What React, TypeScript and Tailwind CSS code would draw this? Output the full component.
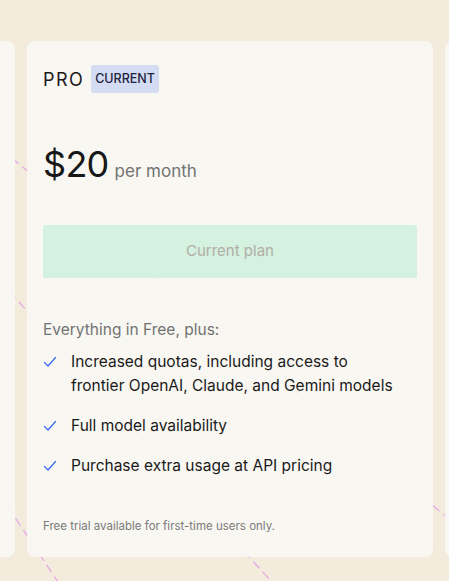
const features = [
  "Increased quotas, including access to frontier OpenAI, Claude, and Gemini models",
  "Full model availability",
  "Purchase extra usage at API pricing",
];

const Check = () => (
  <svg width="14" height="14" viewBox="0 0 14 14" fill="none" className="mt-[5px] shrink-0">
    <path d="M1.5 7.5 L5 11 L12.5 2.5" stroke="#3b6cf6" strokeWidth="1.3" strokeLinecap="round" strokeLinejoin="round" />
  </svg>
);

const Pricing = () => {
  return (
    <div className="relative w-[449px] h-[581px] overflow-hidden bg-[#f3ecdd]">
      {/* decorative dashed lines */}
      <svg className="absolute inset-0" width="449" height="581" viewBox="0 0 449 581">
        <g stroke="#e7a3e6" strokeWidth="1.2" strokeDasharray="9 5" fill="none">
          <line x1="-10" y1="140" x2="460" y2="528" />
          <line x1="0" y1="281" x2="270" y2="580" />
          <line x1="0" y1="495" x2="60" y2="585" />
        </g>
      </svg>

      <div className="relative flex gap-3 pt-[41px] ml-[-391px]">
        <div className="w-[406px] h-[516px] shrink-0 rounded-lg bg-[#faf8f4]/90" />

        <div
          className="w-[406px] h-[516px] shrink-0 rounded-lg bg-[#faf8f4]/90 px-4 pt-6 flex flex-col"
          style={{ fontFamily: "Inter, sans-serif" }}
        >
          <div className="flex items-center gap-[7px]">
            <span className="text-[18px] tracking-[0.08em] text-[#1a1a1a]">PRO</span>
            <span className="h-7 px-1 flex items-center rounded-[3px] bg-[#d4dcf4] text-[12.5px] font-medium text-[#1d2440]">
              CURRENT
            </span>
          </div>

          <div className="mt-[53px] flex items-baseline gap-[6px]">
            <span className="text-[36px] leading-none tracking-[-0.02em] text-[#171717]">$20</span>
            <span className="text-[17px] leading-none text-[#737373]">per month</span>
          </div>

          <button className="mt-[43px] h-[53px] w-full rounded-[2px] bg-[#d5f1e0] text-[15px] text-[#b1ada7]">
            Current plan
          </button>

          <p className="mt-[40px] text-[15.5px] leading-6 text-[#727272]">Everything in Free, plus:</p>

          <ul className="mt-[8px] flex flex-col gap-4">
            {features.map((f) => (
              <li key={f} className="flex gap-[14px] text-[15.5px] leading-6 text-[#1a1a1a]">
                <Check />
                <span className="max-w-[326px]">{f}</span>
              </li>
            ))}
          </ul>

          <p className="mt-auto mb-[22px] text-[11.5px] text-[#7a7a7a]">
            Free trial available for first-time users only.
          </p>
        </div>

        <div className="w-[406px] h-[516px] shrink-0 rounded-lg bg-[#faf8f4]/90" />
      </div>
    </div>
  );
};

export default function App() {
  return <Pricing />;
}
